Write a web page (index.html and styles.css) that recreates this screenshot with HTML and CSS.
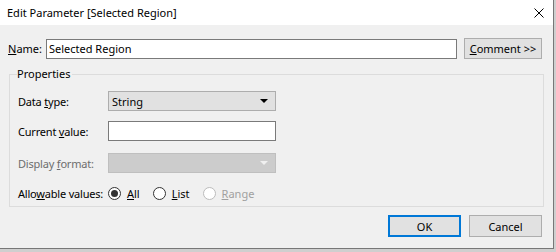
FILE: index.html
```html
<!DOCTYPE html>
<html>
<head>
<meta charset="utf-8">
<link rel="stylesheet" href="styles.css">
</head>
<body>
<div class="window">
  <div class="titlebar">
    <span class="title">Edit Parameter [Selected Region]</span>
    <svg class="close" width="10" height="10" viewBox="0 0 10 10"><path d="M0.5 0.5 L9.5 9.5 M9.5 0.5 L0.5 9.5" stroke="#000" stroke-width="1" fill="none"/></svg>
  </div>
  <div class="content">
    <div class="name-row">
      <label class="name-label"><u>N</u>ame:</label>
      <div class="textbox name-box">Selected Region</div>
      <div class="btn comment-btn"><u>C</u>omment &gt;&gt;</div>
    </div>
    <fieldset class="group">
      <legend>Properties</legend>
      <div class="row row-type">
        <span class="lbl">Data <u>t</u>ype:</span>
        <div class="combo"><span>String</span><span class="arrow"></span></div>
      </div>
      <div class="row row-value">
        <span class="lbl">Current <u>v</u>alue:</span>
        <div class="textbox value-box"></div>
      </div>
      <div class="row row-format">
        <span class="lbl disabled">Display <u>f</u>ormat:</span>
        <div class="combo combo-disabled"><span></span><span class="arrow arrow-disabled"></span></div>
      </div>
      <div class="row row-allow">
        <span class="lbl">Allo<u>w</u>able values:</span>
        <div class="radios">
          <span class="radio-item"><span class="radio checked"></span><span><u>A</u>ll</span></span>
          <span class="radio-item"><span class="radio"></span><span><u>L</u>ist</span></span>
          <span class="radio-item disabled-r"><span class="radio radio-disabled"></span><span><u>R</u>ange</span></span>
        </div>
      </div>
    </fieldset>
    <div class="buttons">
      <div class="btn ok-btn">OK</div>
      <div class="btn cancel-btn">Cancel</div>
    </div>
  </div>
</div>
</body>
</html>
```
FILE: styles.css
```css
html, body {
  margin: 0;
  padding: 0;
}
body {
  background: #cfcfcf;
  width: 556px;
  height: 252px;
  overflow: hidden;
  font-family: "Noto Sans", "Open Sans", sans-serif;
  font-size: 11px;
  color: #000;
}
.window {
  width: 553px;
  height: 248px;
  border-right: 1px solid #777;
  border-bottom: 1px solid #777;
  background: #f0f0f0;
  display: flex;
  flex-direction: column;
}
.titlebar {
  height: 25px;
  flex-shrink: 0;
  background: #fff;
  display: flex;
  align-items: center;
  justify-content: space-between;
  padding: 0 9px 0 7px;
}
u {
  text-decoration: underline;
  text-underline-offset: 1px;
}
.content {
  flex: 1;
  padding: 13px 0 0 0;
}
.name-row {
  display: flex;
  align-items: center;
  height: 21px;
  padding-left: 8px;
}
.name-row > *, .row > *, .buttons > * {
  flex-shrink: 0;
  white-space: nowrap;
}
.name-label {
  width: 38px;
}
.textbox {
  background: #fff;
  border: 1px solid #7a7a7a;
  box-sizing: border-box;
  height: 20px;
  line-height: 18px;
  padding-left: 2px;
}
.name-box {
  width: 411px;
}
.value-box {
  width: 168px;
}
.btn {
  box-sizing: border-box;
  background: #e1e1e1;
  border: 1px solid #adadad;
  height: 21px;
  display: flex;
  align-items: center;
  justify-content: center;
}
.comment-btn {
  width: 78px;
  margin-left: 7px;
}
.group {
  margin: 7px 0 0 9px;
  width: 535px;
  box-sizing: border-box;
  height: 141px;
  border: 1px solid #dcdcdc;
  padding: 0 0 0 8px;
}
.group legend {
  padding: 0 2px 0 0;
  margin-left: -1px;
  line-height: 16px;
}
.row {
  display: flex;
  align-items: center;
  height: 20px;
}
.row-type { margin-top: 9px; }
.row-value { margin-top: 10px; }
.row-format { margin-top: 12px; }
.row-allow { margin-top: 10px; }
.lbl {
  width: 90px;
  letter-spacing: -0.2px;
}
.disabled {
  color: #6d6d6d;
}
.combo {
  width: 168px;
  height: 20px;
  box-sizing: border-box;
  background: #e1e1e1;
  border: 1px solid #adadad;
  display: flex;
  align-items: center;
  justify-content: space-between;
  padding: 0 7px 0 3px;
}
.combo-disabled {
  background: #cccccc;
  border-color: #bfbfbf;
}
.arrow {
  width: 0;
  height: 0;
  border-left: 4px solid transparent;
  border-right: 4px solid transparent;
  border-top: 4px solid #000;
}
.arrow-disabled {
  border-top-color: #f0f0f0;
}
.radios {
  display: flex;
  align-items: center;
}
.radio-item {
  display: flex;
  align-items: center;
  margin-right: 13px;
}
.radio {
  width: 13px;
  height: 13px;
  box-sizing: border-box;
  border: 1px solid #333;
  border-radius: 50%;
  background: #fff;
  margin-right: 6px;
  display: flex;
  align-items: center;
  justify-content: center;
}
.checked::after {
  content: "";
  width: 7px;
  height: 7px;
  border-radius: 50%;
  background: #333;
}
.radio-disabled {
  border-color: #bcbcbc;
}
.disabled-r {
  color: #a0a0a0;
}
.buttons {
  display: flex;
  justify-content: flex-end;
  gap: 8px;
  margin-top: 8px;
  padding-right: 11px;
}
.ok-btn, .cancel-btn {
  width: 73px;
  height: 22px;
}
.ok-btn {
  border: 2px solid #0078d7;
}
```
